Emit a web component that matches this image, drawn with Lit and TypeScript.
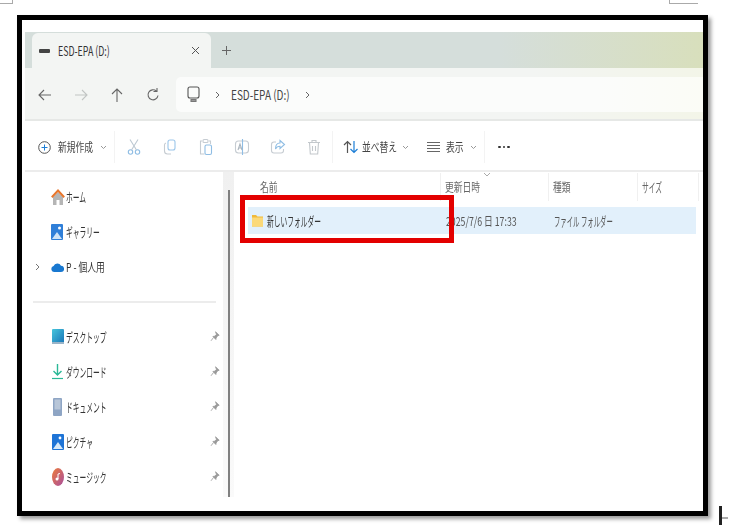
import { LitElement, html, css, svg } from 'lit';
import { customElement } from 'lit/decorators.js';

const chevDown = html`<svg class="chev" width="7" height="5" viewBox="0 0 7 5"><path d="M1 1l2.5 2.5L6 1" fill="none" stroke="#999" stroke-width="1"/></svg>`;

const stroke = (body: unknown, color = '#b3c3d3', w = 18, h = 18) => html`<svg width=${w} height=${h} viewBox="0 0 18 18" fill="none" stroke=${color} stroke-width="1.1">${body}</svg>`;

const navIcons = [
  svg`<path d="M15 9H3.5M8 4L3 9l5 5" stroke="#666"/>`,
  svg`<path d="M3 9h11.5M10 4l5 5-5 5" stroke="#c2c5c4"/>`,
  svg`<path d="M9 16V3.5M4 8l5-5 5 5" stroke="#666"/>`,
  svg`<path d="M14 9.5a5 5 0 1 1-1.6-4.4M13 2v3.5H9.5" stroke="#666"/>`,
];

const toolIcons = [
  svg`<circle cx="5.5" cy="14" r="2.2" stroke="#8fbde4"/><circle cx="12.5" cy="14" r="2.2" stroke="#8fbde4"/><path d="M6.5 12L13 1.5M11.500 12L5 1.500" stroke="#bcc8d2"/>`,
  svg`<rect x="7" y="2" width="7" height="10" rx="2" stroke="#9cc6ea"/><path d="M5 5a2 2 0 0 0-1.500 2v6a3 3 0 0 0 3 3h3.500" stroke="#c6ccd2"/>`,
  svg`<path d="M5 3H3.500v13h4M12 3h1.500v3" stroke="#c6ccd2"/><rect x="6" y="1.500" width="5" height="3" rx="1" stroke="#c6ccd2"/><rect x="8" y="7" width="6.500" height="9.500" rx="1.500" stroke="#8fbde4"/>`,
  svg`<rect x="2.500" y="3" width="13" height="12" rx="3" stroke="#c6ccd2"/><path d="M9.500 1v16" stroke="#8fbde4"/><path d="M5 12l2-6 2 6M5.800 10h2.500" stroke="#aab4bd"/>`,
  svg`<path d="M7 4H5a2.500 2.500 0 0 0-2.500 2.500v6A2.500 2.500 0 0 0 5 15h7a2.500 2.500 0 0 0 2.500-2.500V11" stroke="#c6ccd2"/><path d="M11 2.500l4.500 4-4.500 4V8.300C9 8.300 7.500 9 6.500 11c0-4 2-6 4.500-6z" stroke="#8fbde4"/>`,
  svg`<path d="M3 4.500h12M7 4.500V2.500h4v2M4.500 4.500l.8 11.500h7.400l.8-11.500M7.500 8v5M10.500 8v5" stroke="#c3c8cc"/>`,
];

const folderIcon = html`<svg width="11" height="13" viewBox="0 0 11 13"><path d="M0 1h4l1.500 1.500H11v10H0z" fill="#f0b93a"/><rect y="3.500" width="11" height="9" fill="#fbd978"/></svg>`;

const sideIcons: Record<string, unknown> = {
  home: html`<svg width="14" height="18" viewBox="0 0 14 18"><path d="M2 9v8h3.500v-5h3v5H12V9L7 4z" fill="#b5b5b5"/><path d="M.8 9.200L7 2.500l6.200 6.700" fill="none" stroke="#e8762c" stroke-width="2"/></svg>`,
  gallery: html`<svg width="13" height="18" viewBox="0 0 13 18"><rect y="1" width="12" height="16" rx="1" fill="#2f7fd8"/><circle cx="8.500" cy="5" r="1.500" fill="#fff"/><path d="M1 16l5-7 5 7z" fill="#cfe4f7"/></svg>`,
  cloud: html`<svg width="13" height="12" viewBox="0 0 13 12"><path d="M3 11a3 3 0 0 1-.4-5.900A4 4 0 0 1 10 4.800 3.100 3.100 0 0 1 10 11z" fill="#1878d0"/></svg>`,
  desktop: html`<svg width="12" height="15" viewBox="0 0 12 15"><defs><linearGradient id="dk" x1="0" y1="0" x2="1" y2="1"><stop offset="0" stop-color="#46c5dc"/><stop offset="1" stop-color="#1a76b8"/></linearGradient></defs><rect width="12" height="14" rx="1" fill="url(#dk)"/><rect y="13" width="12" height="2" fill="#9ab4c8"/></svg>`,
  download: html`<svg width="13" height="17" viewBox="0 0 13 17" fill="none" stroke="#2bb897" stroke-width="1.400"><path d="M6.500 1v11M2.500 8l4 4 4-4"/><path d="M1 15.500h11" stroke-width="1.200"/></svg>`,
  docs: html`<svg width="10" height="18" viewBox="0 0 10 18"><rect width="9" height="18" rx="1" fill="#8ea5c4"/><rect x="1.500" y="1.500" width="6" height="10" fill="#b8c6d8"/></svg>`,
  pictures: html`<svg width="12" height="16" viewBox="0 0 12 16"><rect width="12" height="16" rx="1" fill="#1e74d6"/><circle cx="8" cy="4" r="1.400" fill="#fff"/><path d="M1 15l5-7 5 7z" fill="#d7e9f8"/></svg>`,
  music: html`<svg width="12" height="18" viewBox="0 0 12 18"><defs><linearGradient id="mu" x1="0" y1="0" x2="1" y2="1"><stop offset="0" stop-color="#ee7b38"/><stop offset="1" stop-color="#a84fa0"/></linearGradient></defs><ellipse cx="6" cy="9" rx="6" ry="9" fill="url(#mu)"/><circle cx="5" cy="11" r="1.500" fill="#fff"/><path d="M6 11V6l2-.5" fill="none" stroke="#fff" stroke-width="1"/></svg>`,
};

const pinned = [
  { icon: 'desktop', label: 'デスクトップ' },
  { icon: 'download', label: 'ダウンロード' },
  { icon: 'docs', label: 'ドキュメント' },
  { icon: 'pictures', label: 'ピクチャ' },
  { icon: 'music', label: 'ミュージック' },
];

@customElement('app-root')
export class AppRoot extends LitElement {
  static styles = css`
    :host {
      display: block;
      width: 734px;
      height: 527px;
      background: #fff;
      font-family: 'Noto Sans CJK JP', 'Noto Sans', sans-serif;
      color: #333;
      position: relative;
      overflow: hidden;
    }
    svg { display: block; flex: none; }
    .page { padding: 15px 0 0 17px; }
    .frame {
      box-sizing: border-box;
      width: 691px;
      height: 501px;
      border: 5px solid #000;
      box-shadow: 3px 3px 4px rgba(0, 0, 0, 0.4);
      background: #fff;
      padding-top: 12px;
      display: flex;
      flex-direction: column;
      filter: blur(0.35px);
    }
    /* squeezed screenshot text */
    .t { display: inline-block; transform-origin: left center; white-space: nowrap; line-height: 14px; }
    .kanji { font-size: 12px; transform: scaleX(0.73); }
    .kana { font-size: 13px; transform: scaleX(0.52); }
    .narrow { font-size: 13px; transform: scaleX(0.49); }
    .latin { font-size: 13px; transform: scaleX(0.77); }

    .tabs {
      height: 36px;
      margin-left: 3px;
      padding-left: 7px;
      display: flex;
      align-items: flex-end;
      background: linear-gradient(90deg, #d5dedb 0%, #d5dedb 70%, #d8dfbc 100%);
    }
    .tab {
      box-sizing: border-box;
      width: 179px;
      height: 35px;
      background: #f3f5f3;
      border-radius: 6px 6px 0 0;
      display: flex;
      align-items: center;
      padding: 0 11px 0 7px;
    }
    .drive { width: 11px; height: 4px; background: #444; border-radius: 1px; margin-right: 8px; }
    .tab .t { flex: 1; color: #333; transform: scaleX(0.68); }
    .plus { margin: 0 0 13px 11px; }

    .nav {
      height: 53px;
      margin-left: 3px;
      box-sizing: border-box;
      border-bottom: 2px solid #e6e8e6;
      background: linear-gradient(90deg, #f3f5f3 0%, #f3f5f3 75%, #f3f5e8 100%);
      display: flex;
      align-items: center;
      padding: 2px 0 0 2px;
    }
    .nbtn { width: 36px; display: flex; justify-content: center; }
    .addr {
      height: 35px;
      margin-left: 5px;
      flex: 1;
      background: linear-gradient(90deg, #fbfcfb 0%, #fbfcfb 80%, #fbfcf6 100%);
      border-radius: 5px 0 0 5px;
      display: flex;
      align-items: center;
      padding-left: 11px;
    }
    .addr .t { width: 74px; color: #444; }
    .crumb { margin: 0 11px 0 15px; }
    .crumb.last { margin-left: 0; }

    .tools {
      height: 51px;
      margin-left: 3px;
      box-sizing: border-box;
      padding-top: 3px;
      display: flex;
      align-items: center;
      border-bottom: 2px solid #ececec;
    }
    .new { width: 89px; box-sizing: border-box; padding-left: 13px; display: flex; align-items: center; }
    .new .t, .sort .t, .view .t { color: #444; }
    .new .t { width: 42px; margin-left: 7px; }
    .sep { width: 1px; height: 32px; background: #f3f3f3; flex: none; }
    .tbtn { width: 36px; display: flex; justify-content: center; }
    .first { margin-left: 1px; }
    .sort { width: 94px; box-sizing: border-box; padding-left: 10px; display: flex; align-items: center; }
    .sort .t { width: 40px; margin-left: 3px; }
    .view { width: 57px; box-sizing: border-box; padding-left: 0; display: flex; align-items: center; }
    .view .t { width: 24px; margin-left: 6px; }
    .dots { margin-left: 13px; display: flex; gap: 2px; }
    .dots i { width: 2.500px; height: 2.500px; border-radius: 50%; background: #333; }

    .main { flex: 1; display: grid; grid-template-columns: 211px 1fr; min-height: 0; }
    .side { position: relative; padding: 7px 0 0 28px; }
    .side::after {
      content: '';
      position: absolute;
      left: 206px;
      top: 18px;
      bottom: 14px;
      width: 2px;
      background: #808080;
    }
    .band { position: absolute; left: 201px; top: 0; bottom: 14px; width: 11px; background: linear-gradient(180deg, #f0f0f0, #fafafa); }
    .sitem { height: 35px; display: flex; align-items: center; position: relative; }
    .sitem .ic { width: 15px; margin-right: 1px; display: flex; justify-content: center; }
    .caret { position: absolute; left: -15px; }
    .pin { position: absolute; left: 160px; }
    .div { height: 2px; background: #ececec; margin: 17px 0 16px -17px; width: 183px; }

    .content { padding: 0 7px 0 0; min-width: 0; }
    .head { display: grid; grid-template-columns: 209px 108px 89px 61px; height: 33px; position: relative; margin-left: -1px; }
    .head > div { display: flex; align-items: center; padding: 0 0 0 4px; border-right: 1px solid #f0f0f0; height: 28px; margin-top: 1px; color: #666; }
    .head > div:first-child { padding-left: 28px; }
    .sortmark { position: absolute; left: 251px; top: 0; }
    .row {
      margin: 2px 0 0 15px;
      height: 27px;
      background: #e2f0fb;
      display: grid;
      grid-template-columns: 198px 108px 89px;
      align-items: center;
    }
    .row > div { display: flex; align-items: center; color: #555; }
    .row .name { padding-left: 4px; gap: 4px; color: #333; }

    .marker {
      position: absolute;
      box-sizing: border-box;
      left: 240px;
      top: 195px;
      width: 214px;
      height: 48px;
      border: 5px solid #e30000;
    }
    .crop { position: absolute; height: 3px; border-bottom: 1px solid #aaa; top: 0; }
    .crop.l { left: 0; width: 12px; border-right: 1px solid #aaa; }
    .crop.r { left: 669px; width: 28px; border-left: 1px solid #aaa; }
    .cursor { position: absolute; left: 719px; top: 506px; width: 3px; height: 19px; background: #222; }
    .cursor-ret { position: absolute; left: 722px; top: 517px; width: 6px; height: 2px; background: #aaa; }
  `;

  private sideItem(icon: string, label: string, hasPin: boolean) {
    return html`<div class="sitem">
      <span class="ic">${sideIcons[icon]}</span>
      <span class="t kana">${label}</span>
      ${hasPin
        ? html`<svg class="pin" width="10" height="11" viewBox="0 0 10 11"><path d="M5.500.8l3.700 3.500-1.500.4-1.600 2.300-.2 1.500-3-3 1.600-.3 2-1.700z M3.500 6.500L1 9.800" fill="#999" stroke="#999" stroke-width=".8"/></svg>`
        : ''}
    </div>`;
  }

  render() {
    return html`
      <div class="page">
        <div class="frame">
          <div class="tabs">
            <div class="tab">
              <span class="drive"></span>
              <span class="t latin">ESD-EPA (D:)</span>
              <svg width="9" height="9" viewBox="0 0 9 9"><path d="M1 1l7 7M8 1L1 8" stroke="#555" fill="none"/></svg>
            </div>
            <svg class="plus" width="9" height="9" viewBox="0 0 9 9"><path d="M4.500 0v9M0 4.500h9" stroke="#666" fill="none"/></svg>
          </div>
          <div class="nav">
            ${navIcons.map((i) => html`<span class="nbtn">${stroke(i, '#666')}</span>`)}
            <div class="addr">
              <svg width="13" height="18" viewBox="0 0 13 18" fill="none" stroke="#555" stroke-width="1.100"><rect x="1" y="1" width="11" height="11" rx="2"/><path d="M4 13.500h5v2H4z" fill="#999" stroke="#777"/></svg>
              <svg class="crumb" width="5" height="8" viewBox="0 0 5 8"><path d="M1 1l3 3-3 3" fill="none" stroke="#666"/></svg>
              <span class="t latin">ESD-EPA (D:)</span>
              <svg class="crumb last" width="5" height="8" viewBox="0 0 5 8"><path d="M1 1l3 3-3 3" fill="none" stroke="#666"/></svg>
            </div>
          </div>
          <div class="tools">
            <div class="new">
              <svg width="13" height="13" viewBox="0 0 13 13"><circle cx="6.500" cy="6.500" r="5.800" fill="none" stroke="#555"/><path d="M6.500 3.500v6M3.500 6.500h6" stroke="#1c7ed6" fill="none"/></svg>
              <span class="t kanji">新規作成</span>
              ${chevDown}
            </div>
            <span class="sep"></span>
            <span class="first"></span>
            ${toolIcons.map((i) => html`<span class="tbtn">${stroke(i)}</span>`)}
            <span class="sep"></span>
            <div class="sort">
              <svg width="16" height="14" viewBox="0 0 16 14" fill="none" stroke-width="1.200"><path d="M4.500 13V1.500M1 5l3.500-3.500L8 5" stroke="#555"/><path d="M11 1v11.500M7.500 9l3.500 3.500L14.500 9" stroke="#1c7ed6"/></svg>
              <span class="t kanji">並べ替え</span>
              ${chevDown}
            </div>
            <div class="view">
              <svg width="13" height="12" viewBox="0 0 13 12" fill="none" stroke="#666"><path d="M0 1.500h13M0 4.500h13M0 7.500h13M0 10.500h13"/></svg>
              <span class="t kanji">表示</span>
              ${chevDown}
            </div>
            <span class="sep"></span>
            <div class="dots"><i></i><i></i><i></i></div>
          </div>
          <div class="main">
            <div class="side">
              <span class="band"></span>
              ${this.sideItem('home', 'ホーム', false)}
              ${this.sideItem('gallery', 'ギャラリー', false)}
              <div class="sitem">
                <svg class="caret" width="5" height="8" viewBox="0 0 5 8"><path d="M1 1l3 3-3 3" fill="none" stroke="#777"/></svg>
                <span class="ic">${sideIcons.cloud}</span>
                <span class="t kanji">P - 個人用</span>
              </div>
              <div class="div"></div>
              ${pinned.map((p) => this.sideItem(p.icon, p.label, true))}
            </div>
            <div class="content">
              <div class="head">
                <div><span class="t kanji">名前</span></div>
                <div><span class="t kanji">更新日時</span></div>
                <div><span class="t kanji">種類</span></div>
                <div><span class="t kana">サイズ</span></div>
                <svg class="sortmark" width="8" height="5" viewBox="0 0 8 5"><path d="M1 1l3 3 3-3" fill="none" stroke="#aaa"/></svg>
              </div>
              <div class="row">
                <div class="name">${folderIcon}<span class="t kana">新しいフォルダー</span></div>
                <div><span class="t kanji">2025/7/6 日 17:33</span></div>
                <div><span class="t narrow">ファイル フォルダー</span></div>
              </div>
            </div>
          </div>
        </div>
      </div>
      <div class="marker"></div>
      <span class="crop l"></span>
      <span class="crop r"></span>
      <span class="cursor"></span>
      <span class="cursor-ret"></span>
    `;
  }
}
